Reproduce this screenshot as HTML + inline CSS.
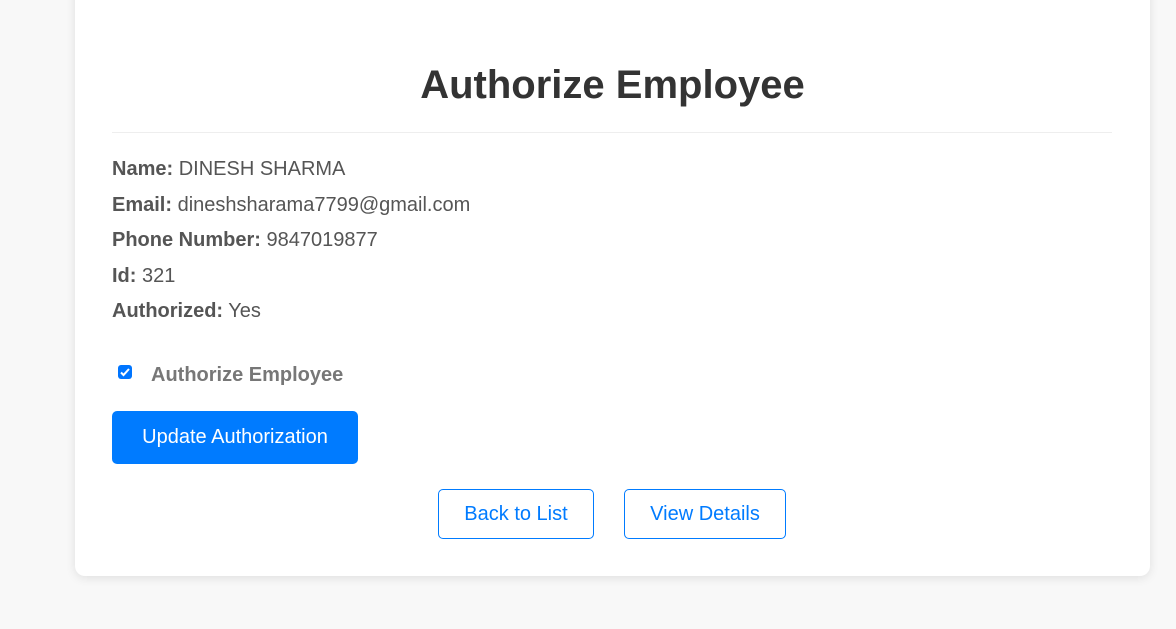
<!DOCTYPE html>
<html><head><style>
body{margin:0;background:#f8f8f8;font-family:"Liberation Sans",Arial,sans-serif;width:1176px;height:629px;overflow:hidden;position:relative}
.card{position:absolute;left:75px;top:-20px;width:1075px;height:596px;background:#fff;border-radius:10px;box-shadow:0 2px 10px rgba(0,0,0,0.1)}
h1{position:absolute;left:0;right:0;top:83px;margin:0;text-align:center;font-size:40px;font-weight:bold;color:#333}
.hr{position:absolute;left:37px;right:38px;top:152px;height:1px;background:#eee}
.row{position:absolute;left:37px;font-size:20px;color:#555}
.row b{color:#555}
.cb{position:absolute;left:43px;top:385px;width:14px;height:14px;background:#0075ff;border-radius:3px}
.cbl{position:absolute;left:76px;top:384px;font-size:20px;font-weight:bold;color:#777}
.btn{position:absolute;left:37px;top:431px;width:246px;height:53px;background:#007bff;border-radius:5px;color:#fff;font-size:20px;text-align:center;line-height:53px}
.ob{position:absolute;top:509px;height:50px;border:1px solid #007bff;border-radius:5px;color:#007bff;font-size:20px;text-align:center;line-height:48px;box-sizing:border-box}
</style></head><body>
<div class="card">
<h1>Authorize Employee</h1>
<div class="hr"></div>
<div class="row" style="top:178px"><b>Name:</b> DINESH SHARMA</div>
<div class="row" style="top:214px"><b>Email:</b> dineshsharama7799@gmail.com</div>
<div class="row" style="top:249px"><b>Phone Number:</b> 9847019877</div>
<div class="row" style="top:285px"><b>Id:</b> 321</div>
<div class="row" style="top:320px"><b>Authorized:</b> Yes</div>
<div class="cb"><svg width="14" height="14" viewBox="0 0 14 14"><path d="M3 7.5l2.5 2.5L11 4" stroke="#fff" stroke-width="2" fill="none"/></svg></div>
<div class="cbl">Authorize Employee</div>
<div class="btn">Update Authorization</div>
<div class="ob" style="left:363px;width:156px">Back to List</div>
<div class="ob" style="left:549px;width:162px">View Details</div>
</div>
</body></html>
